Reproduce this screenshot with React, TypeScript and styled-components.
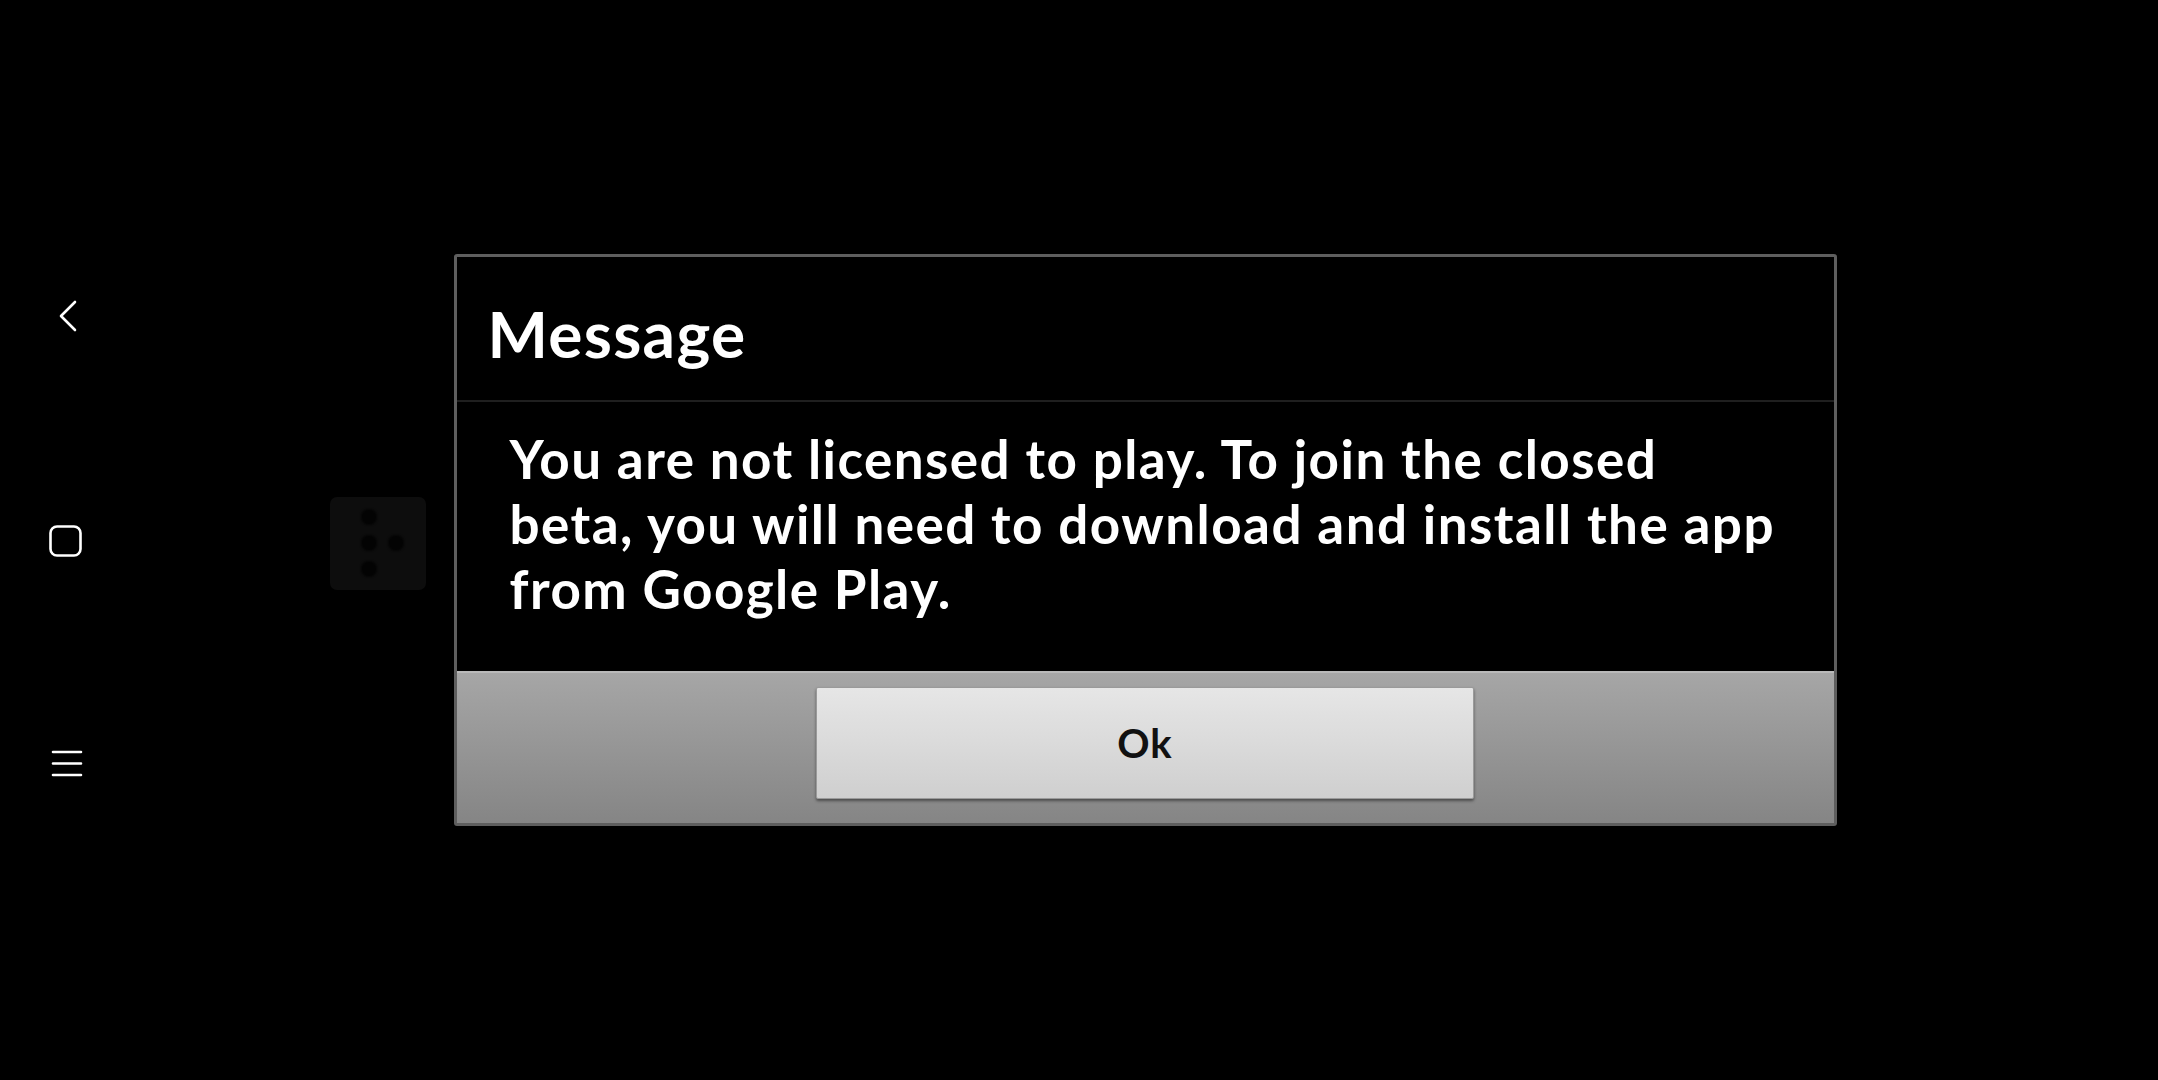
import React from "react";
import styled, { createGlobalStyle } from "styled-components";

const Global = createGlobalStyle`
  html, body { margin: 0; padding: 0; background: #000; }
  body { font-family: Lato, "Open Sans", sans-serif; }
  * { box-sizing: border-box; }
`;

const Screen = styled.div`
  display: flex;
  width: 2158px;
  height: 1080px;
  background: #000;
  overflow: hidden;
`;

const NavRail = styled.nav`
  width: 132px;
  flex: none;
  display: flex;
  flex-direction: column;
  align-items: flex-start;
  padding: 300px 0 0 49px;
  gap: 193px;
`;

const NavButton = styled.div<{ $dx: number }>`
  display: flex;
  margin-left: ${(p) => p.$dx}px;
`;

const Content = styled.main`
  flex: 1;
  position: relative;
  padding: 497px 0 0 198px;
`;

const AppTile = styled.div`
  width: 96px;
  height: 93px;
  border-radius: 7px;
  background: #0d0d0d;
  display: grid;
  grid-template-columns: 16px 16px;
  grid-template-rows: 16px 16px 16px;
  column-gap: 11px;
  row-gap: 10px;
  padding: 12px 0 0 31px;
`;

const Dot = styled.span<{ $col: number; $row: number }>`
  grid-column: ${(p) => p.$col};
  grid-row: ${(p) => p.$row};
  width: 16px;
  height: 16px;
  border-radius: 50%;
  background: #030303;
  filter: blur(1px);
`;

const Overlay = styled.div`
  position: absolute;
  inset: 0;
  display: flex;
  align-items: center;
  justify-content: center;
`;

const Dialog = styled.section`
  width: 1383px;
  height: 572px;
  border: 3px solid #5e5e5e;
  border-radius: 3px;
  background: #000;
  display: flex;
  flex-direction: column;
`;

const Header = styled.header`
  height: 145px;
  flex: none;
  display: flex;
  align-items: center;
  padding: 10px 0 0 31px;
  border-bottom: 2px solid #1f1f1f;
`;

const Title = styled.h1`
  margin: 0;
  font-family: Lato, "Open Sans", sans-serif;
  font-weight: 700;
  font-size: 64px;
  color: #fff;
  letter-spacing: 1.3px;
`;

const Body = styled.div`
  flex: 1;
  padding: 24px 40px 0 53px;
`;

const Text = styled.p`
  margin: 0;
  font-family: Lato, "Open Sans", sans-serif;
  font-weight: 700;
  font-size: 53px;
  line-height: 65px;
  color: #fff;
  letter-spacing: 1.45px;
`;

const Footer = styled.footer`
  height: 152px;
  flex: none;
  display: flex;
  justify-content: center;
  padding-top: 14px;
  background: linear-gradient(#a6a6a6, #858585);
  border-top: 2px solid #b9b9b9;
`;

const OkButton = styled.button`
  width: 658px;
  height: 112px;
  border: 1px solid #9a9a9a;
  border-radius: 2px;
  background: linear-gradient(#e6e6e6, #cfcfcf);
  box-shadow: 0 2px 3px rgba(0, 0, 0, 0.45);
  font-family: Lato, "Open Sans", sans-serif;
  font-weight: 700;
  font-size: 40px;
  letter-spacing: 1px;
  color: #111;
  padding: 0;
  cursor: pointer;
`;

const BackIcon = () => (
  <svg width="20" height="32" viewBox="0 0 20 32" fill="none">
    <path d="M17 2 L3 16 L17 30" stroke="#fff" strokeWidth="2.6" strokeLinecap="round" strokeLinejoin="round" />
  </svg>
);

const HomeIcon = () => (
  <svg width="33" height="32" viewBox="0 0 33 32" fill="none">
    <rect x="1.5" y="1.5" width="30" height="29" rx="6.5" stroke="#fff" strokeWidth="2.6" />
  </svg>
);

const MenuIcon = () => (
  <svg width="32" height="27" viewBox="0 0 32 27" fill="none">
    <path d="M2 2 H30 M2 13.5 H30 M2 25 H30" stroke="#fff" strokeWidth="2.6" strokeLinecap="round" />
  </svg>
);

export default function App() {
  return (
    <>
      <Global />
      <Screen>
        <NavRail>
          <NavButton $dx={9}>
            <BackIcon />
          </NavButton>
          <NavButton $dx={0}>
            <HomeIcon />
          </NavButton>
          <NavButton $dx={2}>
            <MenuIcon />
          </NavButton>
        </NavRail>
        <Content>
          <AppTile>
            <Dot $col={1} $row={1} />
            <Dot $col={1} $row={2} />
            <Dot $col={2} $row={2} />
            <Dot $col={1} $row={3} />
          </AppTile>
          <Overlay>
            <Dialog>
              <Header>
                <Title>Message</Title>
              </Header>
              <Body>
                <Text>
                  You are not licensed to play. To join the closed
                  <br />
                  beta, you will need to download and install the app
                  <br />
                  from Google Play.
                </Text>
              </Body>
              <Footer>
                <OkButton>Ok</OkButton>
              </Footer>
            </Dialog>
          </Overlay>
        </Content>
      </Screen>
    </>
  );
}
